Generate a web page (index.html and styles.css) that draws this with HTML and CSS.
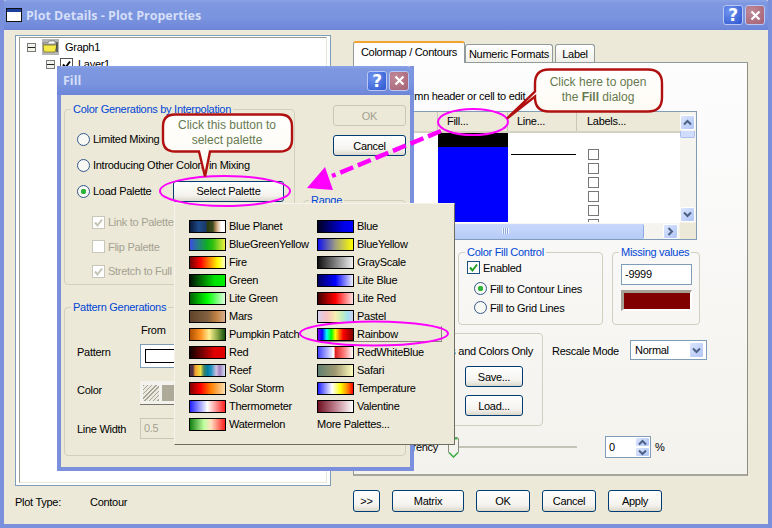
FILE: index.html
```html
<!DOCTYPE html>
<html lang="en">
<head>
  <meta charset="UTF-8">
  <title>Plot Details - Plot Properties</title>
  <link rel="stylesheet" href="styles.css">
</head>
<body>

<svg class="defs" width="0" height="0">
  <symbol id="chev-up" viewBox="0 0 9 7"><path d="M1 5.5 4.5 2 8 5.5" fill="none" stroke="#4d6185" stroke-width="2"/></symbol>
  <symbol id="chev-down" viewBox="0 0 9 7"><path d="M1 1.5 4.5 5 8 1.5" fill="none" stroke="#4d6185" stroke-width="2"/></symbol>
  <symbol id="chev-right" viewBox="0 0 7 9"><path d="M1.5 1 5 4.5 1.5 8" fill="none" stroke="#4d6185" stroke-width="2"/></symbol>
  <symbol id="close-x" viewBox="0 0 11 11"><path d="M1.5 1.5 9.5 9.5M9.5 1.5 1.5 9.5" stroke="#fff" stroke-width="2.2"/></symbol>
  <symbol id="tick" viewBox="0 0 11 11"><path d="M2 5.5 4.5 8.5 9 2.5" fill="none" stroke="currentColor" stroke-width="2"/></symbol>
</svg>

<div class="window">
  <div class="titlebar">
    <svg class="app-icon" width="16" height="14" viewBox="0 0 16 14">
      <rect x="0.5" y="0.5" width="15" height="13" fill="#fff" stroke="#111"/>
      <rect x="1" y="1" width="14" height="3" fill="#1c3f9e"/>
    </svg>
    <span class="title-text">Plot Details - Plot Properties</span>
    <div class="title-btns">
      <span class="cap-btn cap-help">?</span>
      <span class="cap-btn cap-close"><svg width="11" height="11"><use href="#close-x"/></svg></span>
    </div>
  </div>

  <div class="main">
    <div class="left-col">
      <div class="tree">
        <div class="tree-inner">
          <div class="tree-row">
            <span class="expander"></span>
            <svg class="folder" width="17" height="16" viewBox="0 0 17 16">
              <rect width="17" height="16" fill="#b5b5b5"/>
              <path d="M1 4h5l1-2h6v3H1z" fill="#fff" stroke="#555" stroke-width=".6"/>
              <path d="M1 6h14l-2 7H2z" fill="#f6e94a" stroke="#6b6b20" stroke-width=".7"/>
              <path d="M15 3v10" stroke="#111"/>
            </svg>
            <span>Graph1</span>
          </div>
          <div class="tree-row tree-sub">
            <span class="expander"></span>
            <span class="tree-check"><svg width="11" height="11"><use href="#tick"/></svg></span>
            <span>Layer1</span>
          </div>
        </div>
      </div>
      <div class="plot-type"><span class="plot-type-label">Plot Type:</span><span>Contour</span></div>
    </div>

    <div class="right-col">
      <div class="tabs">
        <div class="tab tab-active">Colormap / Contours</div>
        <div class="tab tab-numeric">Numeric Formats</div>
        <div class="tab tab-label">Label</div>
      </div>
      <div class="tab-panel">
        <div class="hint">Click column header or cell to edit</div>

        <div class="level-grid">
          <div class="grid-content">
            <div class="grid-head">
              <div class="col-level">Level</div>
              <div class="col-fill">Fill...</div>
              <div class="col-line">Line...</div>
              <div class="col-labels">Labels...</div>
            </div>
            <div class="grid-body">
              <div class="col-level"></div>
              <div class="col-fill cell-fill"><div class="fill-black"></div></div>
              <div class="col-line"><div class="line-sample"></div></div>
              <div class="col-labels label-checks">
                <span class="grid-check"></span><span class="grid-check"></span><span class="grid-check"></span>
                <span class="grid-check"></span><span class="grid-check"></span><span class="grid-check"></span>
              </div>
            </div>
          </div>
          <div class="vscroll">
            <span class="sb-btn"><svg width="9" height="7"><use href="#chev-up"/></svg></span>
            <span class="sb-thumb"></span>
            <span class="sb-btn"><svg width="9" height="7"><use href="#chev-down"/></svg></span>
          </div>
          <div class="hscroll">
            <span class="hs-thumb"><span class="grip"></span></span>
            <span class="sb-btn sb-right"><svg width="7" height="9"><use href="#chev-right"/></svg></span>
          </div>
          <div class="grid-corner"></div>
        </div>

        <div class="panel-row">
          <fieldset class="group group-details"></fieldset>
          <fieldset class="group group-fillctl">
            <legend>Color Fill Control</legend>
            <label class="opt opt-enabled"><span class="check check-on"><svg width="11" height="11"><use href="#tick"/></svg></span>Enabled</label>
            <label class="opt opt-indent"><span class="radio radio-on"></span>Fill to Contour Lines</label>
            <label class="opt opt-indent"><span class="radio"></span>Fill to Grid Lines</label>
          </fieldset>
          <fieldset class="group group-missing">
            <legend>Missing values</legend>
            <div class="text-input missing-input">-9999</div>
            <div class="missing-color"></div>
          </fieldset>
        </div>

        <div class="panel-row panel-row-2">
          <fieldset class="group group-save">
            <div class="save-label">Levels and Colors Only</div>
            <button class="btn save-btn">Save...</button>
            <button class="btn save-btn">Load...</button>
          </fieldset>
          <div class="rescale">
            <span class="rescale-label">Rescale Mode</span>
            <div class="select"><span>Normal</span><span class="sb-btn select-btn"><svg width="9" height="7"><use href="#chev-down"/></svg></span></div>
          </div>
        </div>

        <div class="transp-row">
          <span class="transp-label">Transparency</span>
          <div class="slider">
            <svg class="slider-thumb" width="11" height="21" viewBox="0 0 11 21">
              <path d="M.5 1.5 1.5.5h8l1 1V15L5.5 20.5.5 15z" fill="#f4f3ee" stroke="#8a8a80"/>
              <path d="M1.5 1.5h8" stroke="#3fb04a" stroke-width="2"/>
              <path d="M1 15.5 5.5 20 10 15.5" fill="none" stroke="#3fb04a" stroke-width="1.5"/>
            </svg>
          </div>
          <div class="spin">
            <span class="spin-value">0</span>
            <span class="spin-btns">
              <span class="sb-btn"><svg width="9" height="7"><use href="#chev-up"/></svg></span>
              <span class="sb-btn"><svg width="9" height="7"><use href="#chev-down"/></svg></span>
            </span>
          </div>
          <span>%</span>
        </div>
      </div>

      <div class="footer-btns">
        <button class="btn btn-more">&gt;&gt;</button>
        <button class="btn btn-matrix">Matrix</button>
        <button class="btn btn-foot">OK</button>
        <button class="btn btn-foot">Cancel</button>
        <button class="btn btn-foot">Apply</button>
      </div>
    </div>
  </div>

  <!-- Fill dialog over the main window -->
  <div class="dialog">
    <div class="titlebar dialog-title">
      <span class="title-text">Fill</span>
      <div class="title-btns">
        <span class="cap-btn cap-help">?</span>
        <span class="cap-btn cap-close"><svg width="11" height="11"><use href="#close-x"/></svg></span>
      </div>
    </div>
    <div class="dialog-body">
      <div class="dialog-top">
        <fieldset class="group group-interp">
          <legend>Color Generations by Interpolation</legend>
          <label class="opt opt-radio"><span class="radio"></span>Limited Mixing</label>
          <label class="opt opt-radio"><span class="radio"></span>Introducing Other Colors in Mixing</label>
          <div class="opt opt-radio">
            <label class="opt load-label"><span class="radio radio-on"></span>Load Palette</label>
            <button class="btn select-palette">Select Palette</button>
          </div>
          <div class="palette-checks">
            <label class="opt opt-off"><span class="check check-off"><svg width="11" height="11"><use href="#tick"/></svg></span>Link to Palette</label>
            <label class="opt opt-off"><span class="check check-off"></span>Flip Palette</label>
            <label class="opt opt-off"><span class="check check-off"><svg width="11" height="11"><use href="#tick"/></svg></span>Stretch to Full</label>
          </div>
        </fieldset>
        <div class="dialog-side">
          <button class="btn btn-side" disabled>OK</button>
          <button class="btn btn-side">Cancel</button>
          <fieldset class="group group-range"><legend>Range</legend></fieldset>
        </div>
      </div>
      <fieldset class="group group-pattern">
        <legend>Pattern Generations</legend>
        <div class="from-label">From</div>
        <div class="pat-row pat-pattern">
          <span class="pat-label">Pattern</span>
          <div class="pattern-box"><span class="pattern-swatch"></span></div>
        </div>
        <div class="pat-row">
          <span class="pat-label">Color</span>
          <div class="color-box"><span class="hatch"></span><span class="color-arrow"></span></div>
        </div>
        <div class="pat-row pat-width">
          <span class="pat-label">Line Width</span>
          <div class="text-input input-off">0.5</div>
        </div>
      </fieldset>
    </div>
  </div>

  <!-- palette popup -->
  <div class="popup">
    <div class="pal-item"><span class="swatch p-blue-planet"></span>Blue Planet</div>
    <div class="pal-item"><span class="swatch p-blue"></span>Blue</div>
    <div class="pal-item"><span class="swatch p-bgy"></span>BlueGreenYellow</div>
    <div class="pal-item"><span class="swatch p-by"></span>BlueYellow</div>
    <div class="pal-item"><span class="swatch p-fire"></span>Fire</div>
    <div class="pal-item"><span class="swatch p-gray"></span>GrayScale</div>
    <div class="pal-item"><span class="swatch p-green"></span>Green</div>
    <div class="pal-item"><span class="swatch p-lite-blue"></span>Lite Blue</div>
    <div class="pal-item"><span class="swatch p-lite-green"></span>Lite Green</div>
    <div class="pal-item"><span class="swatch p-lite-red"></span>Lite Red</div>
    <div class="pal-item"><span class="swatch p-mars"></span>Mars</div>
    <div class="pal-item"><span class="swatch p-pastel"></span>Pastel</div>
    <div class="pal-item"><span class="swatch p-pumpkin"></span>Pumpkin Patch</div>
    <div class="pal-item pal-hover"><span class="swatch p-rainbow"></span>Rainbow</div>
    <div class="pal-item"><span class="swatch p-red"></span>Red</div>
    <div class="pal-item"><span class="swatch p-rwb"></span>RedWhiteBlue</div>
    <div class="pal-item"><span class="swatch p-reef"></span>Reef</div>
    <div class="pal-item"><span class="swatch p-safari"></span>Safari</div>
    <div class="pal-item"><span class="swatch p-solar"></span>Solar Storm</div>
    <div class="pal-item"><span class="swatch p-temp"></span>Temperature</div>
    <div class="pal-item"><span class="swatch p-thermo"></span>Thermometer</div>
    <div class="pal-item"><span class="swatch p-valentine"></span>Valentine</div>
    <div class="pal-item"><span class="swatch p-melon"></span>Watermelon</div>
    <div class="pal-item">More Palettes...</div>
  </div>

  <!-- annotations drawn on top of the screenshot -->
  <svg class="notes" width="772" height="528" viewBox="0 0 772 528">
    <defs>
      <linearGradient id="note-bg" x1="0" y1="0" x2="0" y2="1">
        <stop offset="0" stop-color="#fff"/>
        <stop offset="1" stop-color="#fdfaf0"/>
      </linearGradient>
    </defs>
    <ellipse cx="473" cy="122" rx="35" ry="13" class="note-ring"/>
    <ellipse cx="225" cy="191" rx="65" ry="15" class="note-ring"/>
    <ellipse cx="374" cy="333.5" rx="74" ry="12" class="note-ring"/>
    <path d="M441 131 332 176" fill="none" stroke="#ff00ff" stroke-width="4.5" stroke-dasharray="14 5"/>
    <path d="M307 188 325 167 333 190z" fill="#ff00ff"/>
    <path class="note-shape" d="M175 114.500h105q12 0 12 12v13q0 12-12 12h-70l-5 25-6-25h-24q-12 0-12-12v-13q0-12 12-12z"/>
    <text class="note-text" x="227" y="129">Click this button to</text>
    <text class="note-text" x="227" y="144">select palette</text>
    <path class="note-shape" d="M549 69.500h99q14 0 14 14v14q0 14-14 14h-99q-14 0-14-14v-1l-28 22 28-27v-8q0-14 14-14z"/>
    <text class="note-text" x="598" y="86">Click here to open</text>
    <text class="note-text" x="598" y="101">the <tspan class="note-bold">Fill</tspan> dialog</text>
  </svg>
</div>

</body>
</html>
```

FILE: styles.css
```css
* {
  box-sizing: border-box;
}
body {
  margin: 0;
  font-family: "Liberation Sans", sans-serif;
  font-size: 11px;
  letter-spacing: -0.28px;
  color: #000;
}
.defs {
  position: absolute;
}
.window {
  position: relative;
  width: 772px;
  height: 528px;
  overflow: hidden;
  background: #ece9d8;
  border: solid #7a90dc;
  border-width: 0 4px 4px;
}

/* title bars */
.titlebar {
  display: flex;
  align-items: center;
  height: 30px;
  margin: 0 -4px;
  padding: 0 7px 0 6px;
  border-radius: 7px 7px 0 0;
  background: linear-gradient(#8ba3e6 0, #7d97e0 12%, #7a94df 60%, #6d85d8 100%);
}
.app-icon {
  margin-right: 4px;
}
.title-text {
  font-family: "Open Sans", sans-serif;
  font-weight: 700;
  font-size: 12.5px;
  letter-spacing: 0;
  color: #d5def7;
}
.title-btns {
  display: flex;
  gap: 2px;
  margin-left: auto;
}
.cap-btn {
  display: flex;
  align-items: center;
  justify-content: center;
  width: 20px;
  height: 20px;
  border: 1px solid #b9c7f2;
  border-radius: 3px;
  color: #fff;
  font-weight: 700;
  font-size: 17px;
  font-family: "DejaVu Sans", sans-serif;
}
.cap-help {
  background: radial-gradient(circle at 30% 30%, #6f94ee, #2b55d0);
}
.cap-close {
  background: radial-gradient(circle at 30% 30%, #c08a98, #a46074);
}

/* main window layout */
.main {
  display: flex;
  padding: 5px 0 0 11px;
}
.left-col {
  width: 316px;
  margin-right: 22px;
}
.tree {
  height: 451px;
  padding: 1px 3px 2px;
  background: #fff;
  border: 1px solid #7f9db9;
}
.tree-inner {
  height: 100%;
  padding: 1px 7px;
  border: 1px solid;
  border-color: #9a9a90 #e8e6da #e8e6da #9a9a90;
}
.tree-row {
  display: flex;
  align-items: center;
  height: 16px;
  gap: 6px;
}
.tree-sub {
  margin: 1px 0 0 19px;
  gap: 5px;
}
.expander {
  width: 9px;
  height: 9px;
  border: 1px solid #7a7a7a;
  background: linear-gradient(transparent 3px, #222 3px, #222 4px, transparent 4px), #f2f2ea;
}
.tree-check {
  display: flex;
  width: 13px;
  height: 13px;
  border: 1px solid #555;
  color: #000;
}
.plot-type {
  display: flex;
  margin-top: 9px;
  line-height: 14px;
}
.plot-type-label {
  width: 75px;
}

/* tabs */
.right-col {
  width: 395px;
  padding-top: 7px;
}
.tabs {
  display: flex;
  align-items: flex-end;
  height: 20px;
}
.tab {
  height: 18px;
  padding: 2px 0 0;
  border: 1px solid #919b9c;
  border-bottom: 0;
  border-radius: 3px 3px 0 0;
  background: linear-gradient(#fff, #f0efe8);
  line-height: 14px;
  text-align: center;
  white-space: nowrap;
}
.tab-active {
  position: relative;
  z-index: 1;
  width: 112px;
  height: 22px;
  margin-bottom: -1px;
  border-top: 2px solid #f2a32c;
  background: #fdfdfd;
}
.tab-numeric {
  width: 88px;
}
.tab-label {
  width: 40px;
  margin-left: 2px;
}
.tab-panel {
  height: 414px;
  padding: 26px 0 0 12px;
  background: linear-gradient(#fdfdfe, #f3f2ed);
  border: 1px solid #919b9c;
  border-right-color: #8d8d86;
  border-bottom: 2px solid #a7a69d;
}
.hint {
  height: 22px;
  padding-left: 4px;
  line-height: 14px;
}

/* level table */
.level-grid {
  display: grid;
  grid-template-columns: 1fr 16px;
  grid-template-rows: 1fr 16px;
  width: 331px;
  height: 129px;
  background: #fff;
  border: 1px solid #7f9db9;
}
.grid-head {
  display: flex;
  height: 21px;
  background: #ece9d8;
  border-bottom: 2px solid #d6d2c2;
  line-height: 19px;
}
.grid-head > div {
  padding-left: 9px;
  border-right: 1px solid #cbc7b8;
}
.col-level {
  width: 71px;
  flex: none;
}
.col-fill {
  width: 70px;
  flex: none;
}
.col-line {
  width: 69px;
  flex: none;
}
.col-labels {
  flex: 1;
}
.grid-head .col-labels {
  border-right: 0;
  padding-left: 10px;
}
.grid-body {
  display: flex;
  height: 89px;
  overflow: hidden;
}
.cell-fill {
  background: #0000ff;
}
.fill-black {
  height: 14px;
  background: #000;
}
.line-sample {
  height: 1px;
  margin: 21px 1px 0 3px;
  background: #000;
}
.label-checks {
  display: flex;
  flex-direction: column;
  padding: 16px 0 0 11px;
}
.grid-check {
  flex: none;
  width: 11px;
  height: 11px;
  margin-bottom: 3px;
  border: 1px solid #777;
  background: #fff;
}
.vscroll {
  display: flex;
  flex-direction: column;
  padding: 3px 0 1px;
  background: #f5f4ef;
}
.sb-btn {
  display: flex;
  align-items: center;
  justify-content: center;
  flex: none;
  width: 15px;
  height: 15px;
  border: 1px solid #fff;
  border-radius: 2px;
  background: linear-gradient(135deg, #dbe5fd, #b0c5f7);
}
.vscroll .sb-btn:last-child {
  margin-top: auto;
}
.sb-thumb {
  height: 7px;
  width: 15px;
  margin-top: 1px;
  border: 1px solid #a9bdf0;
  border-top: 0;
  border-radius: 0 0 2px 2px;
  background: #cfdcfb;
}
.hscroll {
  display: flex;
  align-items: center;
  background: #f5f4ef;
}
.hs-thumb {
  display: flex;
  align-items: center;
  justify-content: center;
  width: 277px;
  height: 15px;
  border-right: 1px solid #8da8e6;
  border-radius: 2px;
  background: linear-gradient(#c9d8fb, #b6cbf8);
}
.grip {
  width: 7px;
  height: 6px;
  background: repeating-linear-gradient(90deg, #eef3fe 0 1px, #8ea8e0 1px 2px);
}
.sb-right {
  margin-left: 19px;
}
.grid-corner {
  background: #ece9d8;
}

/* group boxes */
.group {
  margin: 0;
  padding: 0;
  min-width: 0;
  border: 1px solid #d0d0bf;
  border-radius: 4px;
}
.group legend {
  padding: 0 2px;
  color: #0046d5;
  line-height: 14px;
  white-space: nowrap;
}
.panel-row {
  display: flex;
  margin-top: 5px;
}
.group-details {
  width: 84px;
  height: 73px;
  margin: 7px 8px 0 0;
}
.group-fillctl {
  width: 145px;
  height: 80px;
  margin-right: 9px;
  padding: 0 0 0 8px;
}
.group-fillctl legend,
.group-missing legend {
  margin-left: -2px;
}
.group-missing {
  width: 88px;
  height: 80px;
  padding: 5px 0 0 8px;
}
.opt {
  display: flex;
  align-items: center;
  gap: 3px;
}
.opt-enabled {
  height: 15px;
  margin-top: 1px;
}
.opt-indent {
  height: 19px;
  margin: 0 0 0 7px;
}
.opt-indent:nth-of-type(2) {
  margin-top: 4px;
}
.check {
  display: flex;
  flex: none;
  width: 13px;
  height: 13px;
  background: #fff;
  border: 1px solid #1c5180;
  color: #21a121;
}
.radio {
  flex: none;
  width: 13px;
  height: 13px;
  background: #f8f8f4;
  border: 1px solid #33588a;
  border-radius: 50%;
}
.radio-on {
  background: radial-gradient(circle, #2fb53c 0, #2fb53c 2.5px, #f8f8f4 3px);
}
.text-input {
  height: 21px;
  padding-left: 3px;
  border: 1px solid #7f9db9;
  background: #fff;
  line-height: 19px;
}
.missing-input {
  width: 71px;
}
.missing-color {
  width: 71px;
  height: 21px;
  margin-top: 5px;
  border: solid #a5a295;
  border-color: #a5a295 #fff #fff #a5a295;
  border-width: 3px 2px 2px 3px;
  background: #800000;
}
.panel-row-2 {
  margin-top: 8px;
}
.group-save {
  display: flex;
  flex-direction: column;
  align-items: flex-end;
  width: 177px;
  height: 93px;
  padding: 10px 19px 0 0;
}
.save-label {
  margin: 0 -10px 8px 0;
  line-height: 14px;
}
.btn {
  height: 21px;
  padding: 0;
  font: inherit;
  letter-spacing: inherit;
  color: #000;
  border: 1px solid #003c74;
  border-radius: 3px;
  background: linear-gradient(#fff, #f4f3ee 70%, #dcd8cb);
}
.btn:disabled {
  color: #a5a192;
  border-color: #c9c7ba;
  background: #ece9d8;
}
.save-btn {
  width: 58px;
  margin-bottom: 8px;
}
.rescale {
  display: flex;
  align-items: flex-start;
  margin-left: 9px;
  padding-top: 7px;
  line-height: 22px;
}
.rescale-label {
  width: 78px;
}
.select {
  display: flex;
  align-items: center;
  justify-content: space-between;
  width: 77px;
  height: 20px;
  padding: 0 2px 0 4px;
  border: 1px solid #7f9db9;
  background: #fff;
}
.select-btn {
  height: 16px;
}
.transp-row {
  display: flex;
  align-items: center;
  margin-top: 10px;
}
.transp-label {
  width: 72px;
  margin-right: 10px;
  text-align: right;
}
.slider {
  position: relative;
  width: 129px;
  height: 2px;
  margin-right: 28px;
  background: #c5c3b6;
}
.slider-thumb {
  position: absolute;
  left: 0;
  top: -9px;
}
.spin {
  display: flex;
  justify-content: space-between;
  align-items: center;
  width: 46px;
  height: 22px;
  margin-right: 4px;
  padding-left: 3px;
  border: 1px solid #7f9db9;
  background: #fff;
}
.spin-btns {
  display: flex;
  flex-direction: column;
}
.spin-btns .sb-btn {
  height: 10px;
}
.footer-btns {
  display: flex;
  margin-top: 14px;
  gap: 12px;
}
.btn-more {
  width: 27px;
}
.btn-matrix {
  width: 72px;
}
.btn-foot {
  width: 54px;
}
.footer-btns .btn {
  height: 22px;
}

/* Fill dialog */
.dialog {
  position: absolute;
  left: 53px;
  top: 66px;
  width: 357px;
  height: 405px;
  background: #ece9d8;
  border: solid #7a90dc;
  border-width: 0 4px 4px;
}
.dialog-title {
  height: 29px;
  padding: 0 5px 0 6px;
}
.dialog-body {
  padding: 7px 0 0 3px;
}
.dialog-top {
  display: flex;
}
.group-interp {
  width: 231px;
  height: 183px;
  padding: 10px 0 0 12px;
}
.group-interp legend {
  margin-left: -6px;
}
.opt-radio {
  height: 26px;
}
.load-label {
  width: 93px;
}
.select-palette {
  width: 111px;
}
.palette-checks {
  padding: 6px 0 0 15px;
}
.palette-checks .opt {
  height: 24.500px;
}
.opt-off {
  color: #a5a192;
}
.check-off {
  border-color: #c9c7ba;
  color: #c5c3b6;
}
.dialog-side {
  position: relative;
  width: 103px;
  margin-left: 8px;
  padding: 0 0 0 30px;
}
.btn-side {
  display: block;
  width: 73px;
  margin: 3px 0 9px;
}
.group-range {
  position: absolute;
  left: 0;
  top: 91px;
  width: 103px;
  height: 90px;
}
.group-range legend {
  margin-left: 5px;
}
.group-pattern {
  width: 342px;
  height: 156px;
  margin-top: 15px;
  padding: 9px 0 0 12px;
}
.group-pattern legend {
  margin-left: -6px;
}
.from-label {
  height: 15px;
  margin-left: 64px;
  line-height: 15px;
}
.pat-row {
  display: flex;
  height: 24px;
  margin-top: 13px;
}
.pat-pattern {
  margin-top: 6px;
}
.pat-label {
  width: 63px;
  flex: none;
  line-height: 18px;
}
.pat-pattern .pat-label {
  line-height: 16px;
}
.pat-width .pat-label {
  line-height: 22px;
}
.pat-row > div {
  width: 90px;
}
.pattern-box {
  display: flex;
  align-items: center;
  height: 24px;
  padding-left: 4px;
  border: 1px solid #7f9db9;
  background: #fff;
}
.pattern-swatch {
  width: 70px;
  height: 14px;
  border: 1px solid #000;
}
.color-box {
  display: flex;
  height: 24px;
  padding: 4px 3px 3px;
  background: #f3f2ec;
  border-bottom: 1px solid #77756a;
}
.hatch {
  width: 16px;
  background: repeating-linear-gradient(135deg, #a7a595 0 1px, #eceae0 1px 3px);
}
.color-arrow {
  flex: 1;
  margin-left: 3px;
  background: #aeaa9a;
}
.input-off {
  color: #a5a192;
  background: #ece9d8;
  border-color: #c9c7ba;
}

/* palette popup */
.popup {
  position: absolute;
  left: 170px;
  top: 203px;
  width: 281px;
  height: 242px;
  display: grid;
  grid-template-columns: 128px 128px;
  grid-auto-rows: 18px;
  padding: 13px 0 0 14px;
  background: #ece9d8;
  border: 1px solid;
  border-color: #f6f4ea #6f6d62 #6f6d62 #f6f4ea;
}
.pal-item {
  display: flex;
  align-items: center;
  gap: 3px;
  white-space: nowrap;
}
.pal-hover {
  margin: 1px 3px 1px 0;
  box-shadow: inset -1px -1px 0 #8a8878;
}
.swatch {
  flex: none;
  width: 37px;
  height: 13px;
  border: 1px solid #000;
}
.p-blue-planet { background: linear-gradient(90deg, #0a1a3a, #1e4a8a 25%, #1a3a6a 45%, #2c3a10 50%, #3a4a20 65%, #a08050 72%, #e0c0a0 80%, #fff 90%); }
.p-blue { background: linear-gradient(90deg, #000020, #0000e0 70%, #0000ff); }
.p-bgy { background: linear-gradient(90deg, #3a50e0, #10b020 50%, #30c010 65%, #f0f040); }
.p-by { background: linear-gradient(90deg, #1010f0, #a0a080 50%, #ffff00); }
.p-fire { background: linear-gradient(90deg, #700000, #ff0000 30%, #ff8000 55%, #ffff00 80%, #ffffd0); }
.p-gray { background: linear-gradient(90deg, #101010, #f0f0f0); }
.p-green { background: linear-gradient(90deg, #001000, #00e000 70%, #00f000); }
.p-lite-blue { background: linear-gradient(90deg, #000060, #0000ff 50%, #f0f0ff); }
.p-lite-green { background: linear-gradient(90deg, #006000, #00ff00 50%, #e0ffe0); }
.p-lite-red { background: linear-gradient(90deg, #400000, #ff0000 50%, #ffe0e0); }
.p-mars { background: linear-gradient(90deg, #60452a, #806040 50%, #c08040 75%, #d8b090); }
.p-pastel { background: linear-gradient(90deg, #d8d0f0, #f8c0c0 25%, #f8f0b0 50%, #c0f0c0 70%, #a0e0f0 85%, #d0d0f0); }
.p-pumpkin { background: linear-gradient(90deg, #b05000, #ff9020 30%, #fff090 55%, #80a040 80%, #105010); }
.p-rainbow { background: linear-gradient(90deg, #8000ff, #0000ff 12%, #00ffff 25%, #00ff00 38%, #ffff00 50%, #ff8000 60%, #ff0000 72%, #800000); }
.p-red { background: linear-gradient(90deg, #100000, #e00000 70%); }
.p-rwb { background: linear-gradient(90deg, #4040ff, #ffffff 45%, #e02020 50%, #ff8080 75%, #ffffff); }
.p-reef { background: linear-gradient(90deg, #503040 0 8%, #f0a030 15%, #f0e040 30%, #408060 40%, #0080a0 50%, #2090c0 60%, #d0c0e0 75%, #a080c0 85%, #d0e0f0); }
.p-safari { background: linear-gradient(90deg, #608070, #a09870 50%, #ffffc0); }
.p-solar { background: linear-gradient(90deg, #800000, #ff0000 30%, #ff8000 60%, #f8e0b0); }
.p-temp { background: linear-gradient(90deg, #2020ff, #ffffff 40%, #ffff00 65%, #ff8000 85%, #ff0000); }
.p-thermo { background: linear-gradient(90deg, #2020ff, #ffffff 50%, #ff2020); }
.p-valentine { background: linear-gradient(90deg, #701020, #c08090 50%, #ffffff); }
.p-melon { background: linear-gradient(90deg, #108010, #c0ffa0 40%, #ffe0c0 60%, #ff2020); }

/* annotations */
.notes {
  position: absolute;
  left: -4px;
  top: 0;
  pointer-events: none;
}
.note-ring {
  fill: none;
  stroke: #ff00ff;
  stroke-width: 2;
}
.note-shape {
  fill: url(#note-bg);
  stroke: #b01010;
  stroke-width: 2.4;
}
.note-text {
  font-size: 12px;
  letter-spacing: 0;
  fill: #667a50;
  text-anchor: middle;
}
.note-bold {
  font-weight: 700;
}
```
